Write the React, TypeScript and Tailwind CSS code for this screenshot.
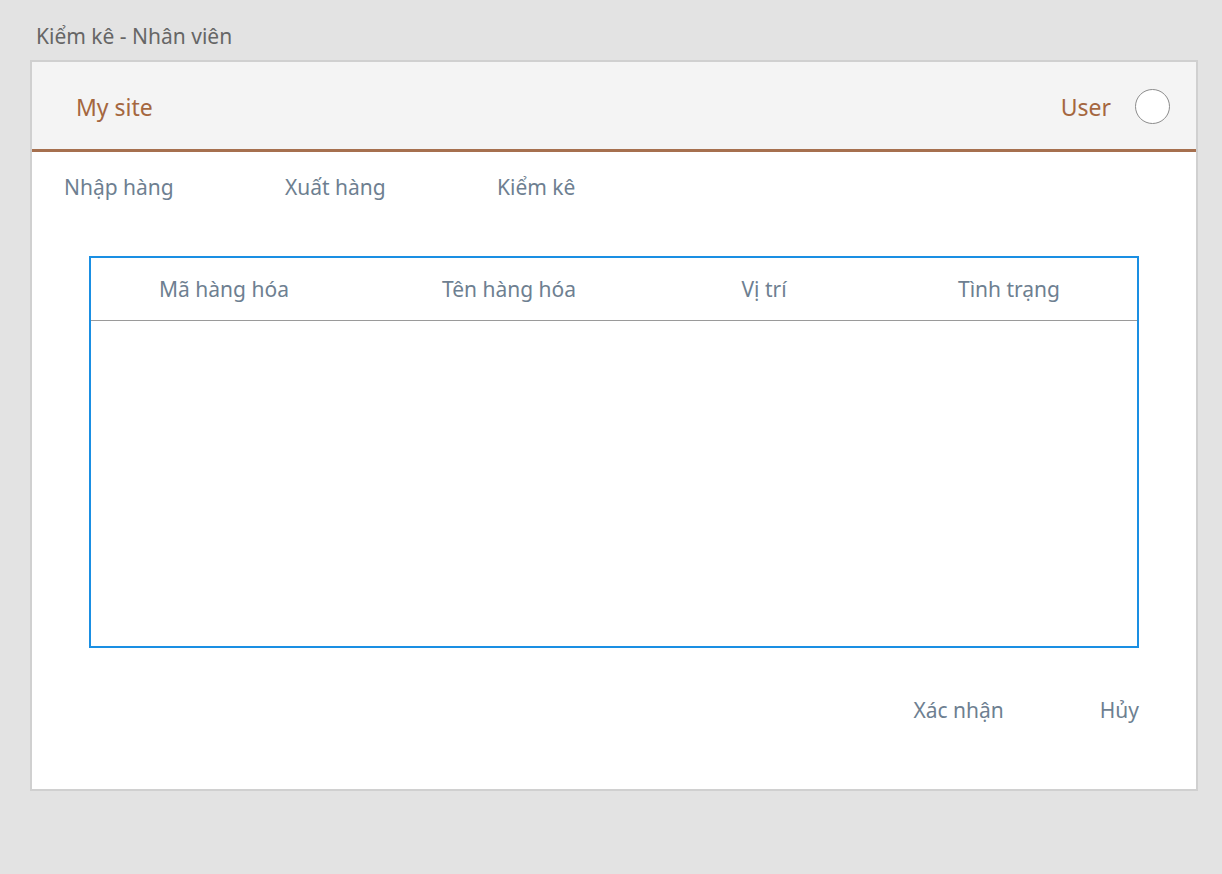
import React from 'react';

const columns = [
  { label: 'Mã hàng hóa', cls: '' },
  { label: 'Tên hàng hóa', cls: '' },
  { label: 'Vị trí', cls: '' },
  { label: 'Tình trạng', cls: 'pl-[14px]' },
];
const navItems = ['Nhập hàng', 'Xuất hàng', 'Kiểm kê'];

export default function App() {
  return (
    <div className="min-h-[874px] w-full bg-[#e3e3e3] pt-[22px] font-['Noto_Sans',sans-serif]">
      <h1 className="pl-[36px] text-[21px] leading-[28px] text-[#666666]">
        Kiểm kê - Nhân viên
      </h1>

      <main className="mt-[10px] ml-[30px] w-[1168px] h-[731px] border-2 border-[#d0d0d0] bg-white flex flex-col">
        <header className="h-[90px] bg-[#f4f4f4] border-b-[3px] border-[#a6704f] flex items-center pl-[44px] pr-[26px]">
          <span className="mt-[4px] text-[23px] text-[#a5673f]">My site</span>
          <div className="ml-auto flex items-center gap-[24px]">
            <span className="mt-[4px] text-[23px] text-[#a5673f]">User</span>
            <div className="mt-[1px] w-[35px] h-[35px] rounded-full border border-[#8c8c8c] bg-white" />
          </div>
        </header>

        <nav className="flex items-center h-[72px] pl-[32px] pb-[1px] text-[21px] text-[#6e7f91]">
          <span className="w-[221px]">{navItems[0]}</span>
          <span className="w-[212px]">{navItems[1]}</span>
          <span>{navItems[2]}</span>
        </nav>

        <section className="mt-[32px] ml-[57px] w-[1050px] h-[392px] border-2 border-[#1a8fe3] flex flex-col">
          <div className="h-[63px] pt-[2px] border-b border-[#9a9a9a] grid grid-cols-[266px_304px_206px_1fr] items-center text-[21px] text-[#6e7f91] text-center">
            {columns.map((c) => (
              <span key={c.label} className={c.cls}>
                {c.label}
              </span>
            ))}
          </div>
          <div className="flex-1" />
        </section>

        <footer className="mt-[46px] pt-[1px] flex justify-end items-center pr-[57px] gap-[96px] text-[21px] text-[#6e7f91]">
          <button>Xác nhận</button>
          <button>Hủy</button>
        </footer>
      </main>
    </div>
  );
}
